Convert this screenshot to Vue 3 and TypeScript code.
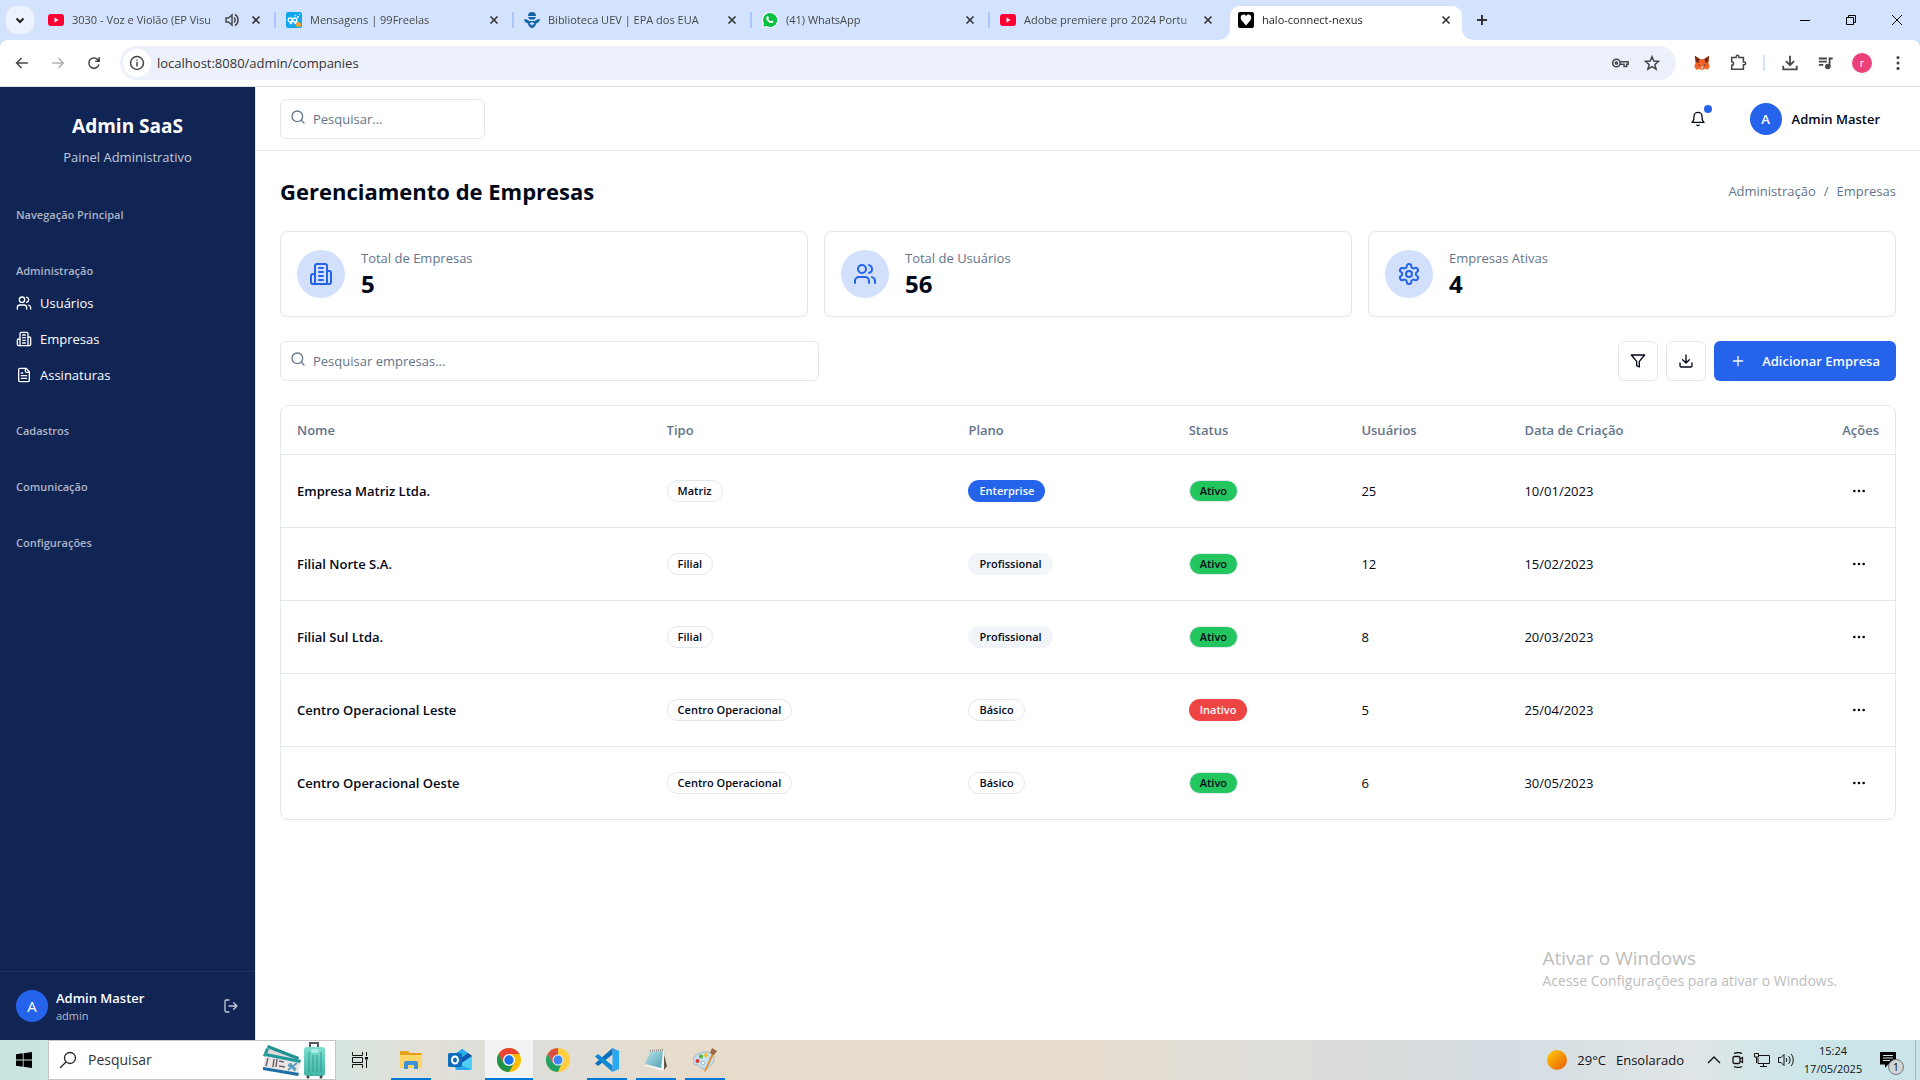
<script setup lang="ts">
interface Tab {
  title: string
  icon: string
  audio?: boolean
  active?: boolean
}

interface Company {
  name: string
  type: string
  plan: string
  planStyle: string
  active: boolean
  users: number
  created: string
}

const tabs: Tab[] = [
  { title: '3030 - Voz e Violão (EP Visu', icon: 'youtube', audio: true },
  { title: 'Mensagens | 99Freelas', icon: 'freelas' },
  { title: 'Biblioteca UEV | EPA dos EUA', icon: 'epa' },
  { title: '(41) WhatsApp', icon: 'whatsapp' },
  { title: 'Adobe premiere pro 2024 Portu', icon: 'youtube' },
  { title: 'halo-connect-nexus', icon: 'heart', active: true },
]

const groups = [
  { label: 'Navegação Principal', items: [] },
  {
    label: 'Administração',
    items: [
      { label: 'Usuários', icon: 'users' },
      { label: 'Empresas', icon: 'building' },
      { label: 'Assinaturas', icon: 'file' },
    ],
  },
  { label: 'Cadastros', items: [] },
  { label: 'Comunicação', items: [] },
  { label: 'Configurações', items: [] },
]

const stats = [
  { label: 'Total de Empresas', value: 5, icon: 'building' },
  { label: 'Total de Usuários', value: 56, icon: 'users' },
  { label: 'Empresas Ativas', value: 4, icon: 'settings' },
]

const companies: Company[] = [
  { name: 'Empresa Matriz Ltda.', type: 'Matriz', plan: 'Enterprise', planStyle: 'primary', active: true, users: 25, created: '10/01/2023' },
  { name: 'Filial Norte S.A.', type: 'Filial', plan: 'Profissional', planStyle: 'secondary', active: true, users: 12, created: '15/02/2023' },
  { name: 'Filial Sul Ltda.', type: 'Filial', plan: 'Profissional', planStyle: 'secondary', active: true, users: 8, created: '20/03/2023' },
  { name: 'Centro Operacional Leste', type: 'Centro Operacional', plan: 'Básico', planStyle: 'outline', active: false, users: 5, created: '25/04/2023' },
  { name: 'Centro Operacional Oeste', type: 'Centro Operacional', plan: 'Básico', planStyle: 'outline', active: true, users: 6, created: '30/05/2023' },
]

const pinned = [
  { name: 'Explorador de Arquivos', icon: 'explorer', running: true },
  { name: 'Outlook', icon: 'outlook', running: false },
  { name: 'Google Chrome', icon: 'chrome', running: true, focused: true },
  { name: 'Google Chrome 2', icon: 'chrome-alt', running: false },
  { name: 'Visual Studio Code', icon: 'vscode', running: true },
  { name: 'Bloco de Notas', icon: 'notepad', running: true },
  { name: 'Paint', icon: 'paint', running: true },
]
</script>

<template>
  <div class="desktop">
    <svg class="sprite" aria-hidden="true">
      <defs>
        <linearGradient id="sunFill" x1="0" y1="0" x2="1" y2="1">
          <stop offset="0" stop-color="#ffd000" />
          <stop offset="1" stop-color="#e8590c" />
        </linearGradient>
        <linearGradient id="padFill" x1="0" y1="0" x2="1" y2="1">
          <stop offset="0" stop-color="#bfe6ec" />
          <stop offset="1" stop-color="#4e9fb5" />
        </linearGradient>
        <linearGradient id="caseFill" x1="0" y1="0" x2="0" y2="1">
          <stop offset="0" stop-color="#7ddfd0" />
          <stop offset="1" stop-color="#3fb5a8" />
        </linearGradient>
      </defs>
      <symbol id="i-users" viewBox="0 0 24 24"><path d="M16 21v-2a4 4 0 0 0-4-4H6a4 4 0 0 0-4 4v2" /><circle cx="9" cy="7" r="4" /><path d="M22 21v-2a4 4 0 0 0-3-3.87M16 3.13a4 4 0 0 1 0 7.75" /></symbol>
      <symbol id="i-building" viewBox="0 0 24 24"><path d="M6 22V4a2 2 0 0 1 2-2h8a2 2 0 0 1 2 2v18Z" /><path d="M6 12H4a2 2 0 0 0-2 2v6a2 2 0 0 0 2 2h2M18 9h2a2 2 0 0 1 2 2v9a2 2 0 0 1-2 2h-2M10 6h4M10 10h4M10 14h4M10 18h4" /></symbol>
      <symbol id="i-file" viewBox="0 0 24 24"><path d="M15 2H6a2 2 0 0 0-2 2v16a2 2 0 0 0 2 2h12a2 2 0 0 0 2-2V7Z" /><path d="M14 2v4a2 2 0 0 0 2 2h4M10 9H8M16 13H8M16 17H8" /></symbol>
      <symbol id="i-settings" viewBox="0 0 24 24"><path d="M12.22 2h-.44a2 2 0 0 0-2 2v.18a2 2 0 0 1-1 1.73l-.43.25a2 2 0 0 1-2 0l-.15-.08a2 2 0 0 0-2.73.73l-.22.38a2 2 0 0 0 .73 2.73l.15.1a2 2 0 0 1 1 1.72v.51a2 2 0 0 1-1 1.74l-.15.09a2 2 0 0 0-.73 2.73l.22.38a2 2 0 0 0 2.73.73l.15-.08a2 2 0 0 1 2 0l.43.25a2 2 0 0 1 1 1.73V20a2 2 0 0 0 2 2h.44a2 2 0 0 0 2-2v-.18a2 2 0 0 1 1-1.73l.43-.25a2 2 0 0 1 2 0l.15.08a2 2 0 0 0 2.73-.73l.22-.39a2 2 0 0 0-.73-2.73l-.15-.08a2 2 0 0 1-1-1.74v-.5a2 2 0 0 1 1-1.74l.15-.09a2 2 0 0 0 .73-2.73l-.22-.38a2 2 0 0 0-2.73-.73l-.15.08a2 2 0 0 1-2 0l-.43-.25a2 2 0 0 1-1-1.73V4a2 2 0 0 0-2-2z" /><circle cx="12" cy="12" r="3" /></symbol>
      <symbol id="i-search" viewBox="0 0 24 24"><circle cx="11" cy="11" r="8" /><path d="m21 21-4.3-4.3" /></symbol>
      <symbol id="i-bell" viewBox="0 0 24 24"><path d="M6 8a6 6 0 0 1 12 0c0 7 3 9 3 9H3s3-2 3-9M10.3 21a1.94 1.94 0 0 0 3.4 0" /></symbol>
      <symbol id="i-filter" viewBox="0 0 24 24"><path d="M22 3H2l8 9.46V19l4 2v-8.54L22 3z" /></symbol>
      <symbol id="i-download" viewBox="0 0 24 24"><path d="M21 15v4a2 2 0 0 1-2 2H5a2 2 0 0 1-2-2v-4M7 10l5 5 5-5M12 15V3" /></symbol>
      <symbol id="i-plus" viewBox="0 0 24 24"><path d="M5 12h14M12 5v14" /></symbol>
      <symbol id="i-dots" viewBox="0 0 24 24"><circle cx="12" cy="12" r="1" /><circle cx="19" cy="12" r="1" /><circle cx="5" cy="12" r="1" /></symbol>
      <symbol id="i-logout" viewBox="0 0 24 24"><path d="M9 21H5a2 2 0 0 1-2-2V5a2 2 0 0 1 2-2h4M16 17l5-5-5-5M21 12H9" /></symbol>
      <symbol id="i-close" viewBox="0 0 16 16"><path d="M4.500 4.500l7 7M11.500 4.500l-7 7" /></symbol>

      <symbol id="f-youtube" viewBox="0 0 16 16"><rect y="2" width="16" height="12" rx="3" fill="#ff0033" /><path d="M6.500 5.500v5L10.500 8z" fill="#fff" /></symbol>
      <symbol id="f-freelas" viewBox="0 0 16 16"><rect width="16" height="16" rx="2" fill="#0fa8ee" /><circle cx="4.200" cy="8" r="2" fill="none" stroke="#fff" stroke-width="1.300" /><circle cx="8.800" cy="8" r="2" fill="none" stroke="#fff" stroke-width="1.300" /><path d="M6.200 8.500c0 2-1 3-2.500 3.500M10.800 8.500c0 2-1 3-2.500 3.500" fill="none" stroke="#fff" stroke-width="1.300" /><circle cx="12.500" cy="12.500" r="2.500" fill="#fba524" /><circle cx="12" cy="5" r="1" fill="#fff" /><circle cx="9.500" cy="3.500" r=".8" fill="#fff" /><circle cx="13.500" cy="2.500" r=".7" fill="#fff" /></symbol>
      <symbol id="f-epa" viewBox="0 0 16 16"><path d="M4 4a4 4 0 0 1 8 0c0 2-1 3-2 3.500H6C5 7 4 6 4 4z" fill="#1465a8" /><path d="M4 4.500h8" stroke="#d3e3fd" /><path d="M0 7c3 0 4 1 5 2h6c1-1 2-2 5-2-.5 3-2 4-4 4.500 0 2-2 4.500-4 4.500s-4-2.500-4-4.500C2 11 .5 10 0 7z" fill="#1465a8" /><path d="M5.500 11.500 8 10l2.500 1.500L8 13.500z" fill="#d3e3fd" /></symbol>
      <symbol id="f-whatsapp" viewBox="0 0 16 16"><path d="M8 0a8 8 0 0 0-7 11.800L0 16l4.300-1A8 8 0 1 0 8 0z" fill="#fff" /><path d="M8 1a7 7 0 0 0-6 10.500L1.300 14.700l3.200-.8A7 7 0 1 0 8 1z" fill="#08c143" /><path d="M5.600 4.200c.4 0 .6 0 .8.5l.5 1.200c0 .4-.6.900-.6 1.100.5 1 1.300 1.800 2.500 2.300.3 0 .7-.9 1-.9l1.700.9c0 1.100-.9 1.800-1.900 1.800C7 10.800 4.200 8 4.200 5.900c0-.8.700-1.700 1.400-1.700z" fill="#fff" /></symbol>
      <symbol id="f-heart" viewBox="0 0 16 16"><rect width="16" height="16" rx="2" fill="#000" /><path d="M8 13.500 3.800 8.500C1.500 5.500 3.200 2.500 5.500 2.500 6.800 2.500 7.600 3.200 8 4c.4-.8 1.200-1.500 2.500-1.500 2.300 0 4 3 1.700 6z" fill="#fff" /></symbol>

      <symbol id="t-explorer" viewBox="0 0 24 24"><path d="M1 4a1 1 0 0 1 1-1h7l2 2h10a2 2 0 0 1 2 2v13H1z" fill="#e6a117" /><path d="M1 7h22v12a1 1 0 0 1-1 1H2a1 1 0 0 1-1-1z" fill="#ffd667" /><path d="M5 21v-6a2 2 0 0 1 2-2h10a2 2 0 0 1 2 2v6h-4v-4H9v4z" fill="#3d8fd6" /></symbol>
      <symbol id="t-outlook" viewBox="0 0 24 24"><path d="M4 8 14 1l10 7v11a3 3 0 0 1-3 3H8z" fill="#1b86d8" /><path d="m14 1 6 4-10 8-5-5z" fill="#29b3ee" /><path d="m10 14 14-7v12a3 3 0 0 1-3 3H8z" fill="#4fd0fb" /><path d="m20 5 4 3-12 8-3-3z" fill="#0f57ae" /><path d="m10 16 13 5-2 1H8z" fill="#2aa8ee" /><rect y="5" width="14" height="14" rx="1.500" fill="#0f6cbd" /><ellipse cx="7" cy="12" rx="3" ry="3.500" fill="none" stroke="#fff" stroke-width="2" /></symbol>
      <symbol id="t-chrome" viewBox="0 0 24 24"><circle cx="12" cy="12" r="12" fill="#fbbc04" /><path d="M1.600 6A12 12 0 0 1 22.400 6H12L6.800 15z" fill="#ea4335" /><path d="M1.600 6A12 12 0 0 0 12 24l5.200-9H6.800z" fill="#1e9448" /><circle cx="12" cy="12" r="6" fill="#fff" /><circle cx="12" cy="12" r="4.700" fill="#1a73e8" /></symbol>
      <symbol id="t-chrome-alt" viewBox="0 0 24 24"><circle cx="12" cy="12" r="12" fill="#ffcf3f" /><path d="M12 0A12 12 0 0 0 1.600 6l5.200 9L12 6z" fill="#d94f43" /><path d="M1.600 6A12 12 0 0 0 12 24l3-7-8.200-2z" fill="#23a065" /><circle cx="12" cy="12" r="5.500" fill="#e8f0fe" /><circle cx="12" cy="12" r="4.500" fill="#4286f5" /></symbol>
      <symbol id="t-vscode" viewBox="0 0 24 24"><path d="M17.500 0 24 3v18l-6.500 3z" fill="#29a9f2" /><path d="M17.500 0v6.500L3 18l-3-2.500z" fill="#0a6fb8" /><path d="M0 8.500 3 6l14.500 11.500V24z" fill="#1088d6" /></symbol>
      <symbol id="t-notepad" viewBox="0 0 24 24"><path d="m19 3 4 15-3 4z" fill="#5d5546" /><path d="m6 3 14-1v20l-1 1L1 18z" fill="#f4f4ee" /><path d="m6 4 13-1-2 17-16-4z" fill="url(#padFill)" /><path d="m6 3 13-1" stroke="#8a8a80" stroke-width="2" stroke-dasharray="1 1" /></symbol>
      <symbol id="t-paint" viewBox="0 0 24 24"><path d="M11 4c7-1 11 3 10 8s-6 9-11 9c-3 0-3-3-5-4-3 0-5-1-5-4 0-5 5-8 11-9z" fill="#c5dfee" stroke="#7f9dad" stroke-width=".6" /><circle cx="4.500" cy="13" r="2" fill="#df3b2e" /><circle cx="8" cy="8.500" r="2" fill="#55ae35" /><circle cx="13" cy="7" r="2" fill="#f0bd27" /><circle cx="10" cy="15" r="1.700" fill="#f5fafc" stroke="#7f9dad" stroke-width=".6" /><path d="m19 5 2 1-8 17-2 1z" fill="#e58a2b" /><path d="m19 0 5 3-3 4-4-2z" fill="#9c6a43" /></symbol>
    </svg>

    <header class="browser">
      <div class="tabstrip">
        <button class="tab-search" aria-label="Pesquisar guias">
          <svg width="16" height="16" viewBox="0 0 16 16"><path d="m4.500 6.500 3.500 3.500 3.500-3.500" fill="none" stroke="#1f1f1f" stroke-width="2" /></svg>
        </button>
        <div v-for="tab in tabs" :key="tab.title" class="tab" :class="{ active: tab.active }">
          <svg class="favicon"><use :href="'#f-' + tab.icon" /></svg>
          <span class="tab-title">{{ tab.title }}</span>
          <svg v-if="tab.audio" class="audio" viewBox="0 0 16 16"><path d="M2 6h2.500L8 3v10L4.500 10H2z" fill="none" stroke="#474747" stroke-width="1.500" /><path d="M10 5.500c1.500 1.300 1.500 3.700 0 5M11 2.500c4 2 4 9 0 11" fill="none" stroke="#474747" stroke-width="1.500" /></svg>
          <button class="tab-close" aria-label="Fechar guia"><svg class="close-icon"><use href="#i-close" /></svg></button>
        </div>
        <button class="new-tab" aria-label="Nova guia">
          <svg width="16" height="16" viewBox="0 0 16 16"><path d="M8 3v10M3 8h10" stroke="#333" stroke-width="2" /></svg>
        </button>
        <div class="window-controls">
          <button aria-label="Minimizar"><svg width="10" height="10" viewBox="0 0 10 10"><path d="M0 5.500h10" /></svg></button>
          <button aria-label="Restaurar"><svg width="10" height="10" viewBox="0 0 10 10"><path d="M.5 2.500h7v7h-7zM2.500 2.500v-2h7v7h-2" /></svg></button>
          <button aria-label="Fechar"><svg width="10" height="10" viewBox="0 0 10 10"><path d="m0 0 10 10M10 0 0 10" /></svg></button>
        </div>
      </div>

      <div class="toolbar">
        <button class="tool" aria-label="Voltar"><svg viewBox="0 0 20 20"><path d="M16.500 10H4.500M9.500 4.500 4 10l5.500 5.500" /></svg></button>
        <button class="tool disabled" aria-label="Avançar"><svg viewBox="0 0 20 20"><path d="M3.500 10h12M10.500 4.500 16 10l-5.500 5.500" /></svg></button>
        <button class="tool" aria-label="Recarregar"><svg viewBox="0 0 20 20"><path d="M15.500 11.500A5.700 5.700 0 1 1 14 6l1.500 1.500M15.800 3.500V8h-4.500" /></svg></button>
        <div class="omnibox">
          <span class="site-info"><svg viewBox="0 0 20 20"><circle cx="10" cy="10" r="7.200" /><path d="M10 9v5M10 6v1.600" /></svg></span>
          <input class="url" type="text" value="localhost:8080/admin/companies" aria-label="Barra de endereço" />
          <button class="omni-btn" aria-label="Senhas"><svg viewBox="0 0 20 20"><circle cx="6" cy="10" r="4.200" /><circle cx="6" cy="10" r="1.200" /><path d="M10 8.500h9v3h-1.500V14h-3v-2.500H10" /></svg></button>
          <button class="omni-btn" aria-label="Favoritar"><svg viewBox="0 0 20 20"><path d="m10 3 2 4.800 5.200.4-4 3.400 1.300 5.100L10 14l-4.500 2.700 1.300-5.100-4-3.400L8 7.800z" /></svg></button>
        </div>
        <button class="tool" aria-label="MetaMask">
          <svg viewBox="0 0 20 20"><path d="m2 2 5.500 3.500h5L18 2l-1 7 1.500 5-2 3.500-3.500-1-1.500 1h-3l-1.500-1-3.500 1-2-3.500L3 9z" fill="#f2652a" stroke="none" /><path d="m2 2 5.500 3.500L6 10 3 9zM18 2l-5.500 3.500L14 10l3-1z" fill="#7a2a14" stroke="none" /><path d="m7 11 1 2-2-.5zM13 11l-1 2 2-.5z" fill="#2b2b3a" stroke="none" /><path d="m8.500 16 .5-2h2l.5 2z" fill="#c7cbd8" stroke="none" /></svg>
        </button>
        <button class="tool" aria-label="Extensões"><svg viewBox="0 0 20 20"><path d="M3 4h5V3a1.500 1.500 0 0 1 3 0v1h5v5h1a1.500 1.500 0 0 1 0 3h-1v5H3v-4.500a2 2 0 0 0 0-4z" /></svg></button>
        <span class="tool-divider"></span>
        <button class="tool" aria-label="Downloads"><svg viewBox="0 0 20 20"><path d="M10 2v10M5.500 8l4.500 4.500L14.500 8M2.500 13v4h15v-4" stroke-width="2" /></svg></button>
        <button class="tool" aria-label="Mídia"><svg viewBox="0 0 20 20"><path d="M2 5h9M2 8.500h9M2 12h5M14 14V5h3.500" stroke-width="2" /><circle cx="12" cy="14" r="2.200" fill="#474747" /></svg></button>
        <button class="tool" aria-label="Perfil"><span class="profile">r</span></button>
        <button class="tool" aria-label="Menu"><svg viewBox="0 0 20 20"><g fill="#474747" stroke="none"><circle cx="10" cy="4" r="1.700" /><circle cx="10" cy="10" r="1.700" /><circle cx="10" cy="16" r="1.700" /></g></svg></button>
      </div>
    </header>

    <div class="app">
      <aside class="sidebar">
        <div class="brand">
          <h1>Admin SaaS</h1>
          <p>Painel Administrativo</p>
        </div>
        <nav class="nav">
          <section v-for="group in groups" :key="group.label" class="nav-group">
            <h2>{{ group.label }}</h2>
            <ul v-if="group.items.length">
              <li v-for="item in group.items" :key="item.label">
                <a href="#"><svg class="icon16"><use :href="'#i-' + item.icon" /></svg>{{ item.label }}</a>
              </li>
            </ul>
          </section>
        </nav>
        <div class="account">
          <span class="avatar light">A</span>
          <div class="account-text">
            <strong>Admin Master</strong>
            <span>admin</span>
          </div>
          <button class="logout" aria-label="Sair"><svg class="icon16"><use href="#i-logout" /></svg></button>
        </div>
      </aside>

      <div class="content">
        <div class="topbar">
          <label class="search global">
            <svg class="icon16"><use href="#i-search" /></svg>
            <input type="text" placeholder="Pesquisar..." aria-label="Pesquisar" />
          </label>
          <div class="topbar-right">
            <button class="bell" aria-label="Notificações">
              <svg class="icon16"><use href="#i-bell" /></svg>
              <span class="bell-dot"></span>
            </button>
            <button class="user"><span class="avatar">A</span>Admin Master</button>
          </div>
        </div>

        <main class="page">
          <div class="page-head">
            <h2>Gerenciamento de Empresas</h2>
            <nav class="crumbs"><a href="#">Administração</a><span>/</span><span>Empresas</span></nav>
          </div>

          <div class="stats">
            <div v-for="stat in stats" :key="stat.label" class="card">
              <span class="card-icon"><svg class="icon24"><use :href="'#i-' + stat.icon" /></svg></span>
              <div>
                <p class="card-label">{{ stat.label }}</p>
                <p class="card-value">{{ stat.value }}</p>
              </div>
            </div>
          </div>

          <div class="actions">
            <label class="search companies">
              <svg class="icon16"><use href="#i-search" /></svg>
              <input type="text" placeholder="Pesquisar empresas..." aria-label="Pesquisar empresas" />
            </label>
            <div class="action-buttons">
              <button class="square" aria-label="Filtrar"><svg class="icon16"><use href="#i-filter" /></svg></button>
              <button class="square" aria-label="Exportar"><svg class="icon16"><use href="#i-download" /></svg></button>
              <button class="add"><svg class="icon16"><use href="#i-plus" /></svg>Adicionar Empresa</button>
            </div>
          </div>

          <div class="table-wrap">
            <table>
              <colgroup>
                <col class="c-name" /><col class="c-type" /><col class="c-plan" /><col class="c-status" /><col class="c-users" /><col class="c-date" /><col />
              </colgroup>
              <thead>
                <tr>
                  <th>Nome</th>
                  <th>Tipo</th>
                  <th>Plano</th>
                  <th>Status</th>
                  <th>Usuários</th>
                  <th>Data de Criação</th>
                  <th class="right">Ações</th>
                </tr>
              </thead>
              <tbody>
                <tr v-for="company in companies" :key="company.name">
                  <td class="name">{{ company.name }}</td>
                  <td><span class="badge outline">{{ company.type }}</span></td>
                  <td><span class="badge" :class="company.planStyle">{{ company.plan }}</span></td>
                  <td><span class="badge" :class="company.active ? 'success' : 'danger'">{{ company.active ? 'Ativo' : 'Inativo' }}</span></td>
                  <td>{{ company.users }}</td>
                  <td>{{ company.created }}</td>
                  <td class="right"><button class="more" aria-label="Ações"><svg class="icon16"><use href="#i-dots" /></svg></button></td>
                </tr>
              </tbody>
            </table>
          </div>
        </main>

        <div class="watermark">
          <p class="wm-title">Ativar o Windows</p>
          <p class="wm-text">Acesse Configurações para ativar o Windows.</p>
        </div>
      </div>
    </div>

    <footer class="taskbar">
      <button class="start" aria-label="Iniciar"><svg width="16" height="16" viewBox="0 0 16 16"><path d="M0 2.300 6.800 1.300V7.600H0zM7.600 1.200 16 0v7.600H7.600zM0 8.400h6.800v6.300L0 13.700zM7.600 8.400H16V16l-8.400-1.200z" /></svg></button>
      <label class="task-search">
        <svg width="18" height="18" viewBox="0 0 18 18"><circle cx="11" cy="7" r="5.500" fill="none" stroke="#222" stroke-width="1.300" /><path d="m7 11-6 6" stroke="#222" stroke-width="1.300" /></svg>
        <input type="text" placeholder="Pesquisar" aria-label="Pesquisar no Windows" />
        <svg class="travel" width="66" height="38" viewBox="0 0 66 38">
          <path d="m7 4 31 12-3 9L2 15z" fill="#e2dadd" /><path d="m7 4 31 12-1 3L6 7z" fill="#1d9291" /><path d="m2 15 3-8 3 1-3 8z" fill="#2b9aa0" />
          <path d="m5 12 35 7-3 15-35-6z" fill="#ece5e2" /><path d="m5 12 35 7-1 3-35-7z" fill="#1d9a99" /><path d="m2 26 36 6-1 3-35-6z" fill="#1c6fa5" />
          <path d="m7 17-2 8M13 18l-1 8M16 18l-1 8" stroke="#6a6374" stroke-width="1.500" /><path d="m18 20 5 1M18 25l6 1" stroke="#6a6374" stroke-width="1.500" />
          <path d="m27 29 9-7M29 22l5 8M27 24l8 4" stroke="#5a9fc0" stroke-width="2" />
          <path d="M49 6V2h8v4" fill="none" stroke="#59595f" stroke-width="2" /><rect x="43" y="6" width="21" height="29" rx="3" fill="url(#caseFill)" /><path d="M48 11v20M52 14v17M56 14v17M60 11v20" stroke="#34998f" /><rect x="50" y="8" width="8" height="4" rx="2" fill="#a8ece2" /><circle cx="47" cy="36" r="1.500" fill="#444" /><circle cx="60" cy="36" r="1.500" fill="#444" />
        </svg>
      </label>
      <button class="task-view" aria-label="Visão de tarefas"><svg width="16" height="16" viewBox="0 0 16 16" fill="none" stroke="#111"><path d="M.5 0v3.500h10V0M.5 16v-3.500h10V16M.5 5.500h10v5H.5zM14.500 0v4M14.500 8v8" /><path d="M13 5h3v2.500h-3z" fill="#111" stroke="none" /></svg></button>
      <div class="pinned">
        <button v-for="item in pinned" :key="item.name" class="pin" :class="{ running: item.running, focused: item.focused }" :aria-label="item.name">
          <svg class="icon-app"><use :href="'#t-' + item.icon" /></svg>
        </button>
      </div>
      <div class="tray">
        <button class="weather"><svg width="20" height="20" viewBox="0 0 20 20"><circle cx="10" cy="10" r="10" fill="url(#sunFill)" /></svg><span>29°C</span><span>Ensolarado</span></button>
        <div class="tray-icons">
          <button aria-label="Mostrar ícones ocultos"><svg width="16" height="16" viewBox="0 0 16 16"><path d="m2 11 6-6 6 6" stroke-width="1.400" /></svg></button>
          <button aria-label="Câmera"><svg width="16" height="16" viewBox="0 0 16 16"><rect x="3" y="4.500" width="7" height="7" rx="1.500" stroke-width="1.300" /><path d="m10 7 2.500-1.500v5L10 9M4 1.500c2.500-1.200 5.500-1.200 8 0M4 14.500c2.500 1.200 5.500 1.200 8 0" stroke-width="1.200" /></svg></button>
          <button aria-label="Rede"><svg width="16" height="16" viewBox="0 0 16 16"><path d="M5 3.500h10.500v8H4V6M9.500 11.500v3M6 14.500h7M.5 1.500h4V5h-4zM2.500 5v6" /></svg></button>
          <button aria-label="Volume"><svg width="16" height="16" viewBox="0 0 16 16"><path d="M.5 5.500h2.500l3-3v11l-3-3H.5zM8 6c1 1 1 3 0 4M10.500 4c2 2 2 6 0 8M13 2c3 3 3 9 0 12" /></svg></button>
        </div>
        <button class="clock"><span>15:24</span><span>17/05/2025</span></button>
        <button class="notify" aria-label="1 nova notificação">
          <svg width="16" height="16" viewBox="0 0 16 16"><path d="M0 0h16v12.500H8L5 16v-3.500H0z" fill="#000" /><path d="M3 3.500h10M3 6h10M3 8.500h7" stroke="#cfe6ea" /></svg>
          <span class="notify-count">1</span>
        </button>
      </div>
    </footer>
  </div>
</template>

<style>
body {
  margin: 0;
  background: #fff;
}
</style>

<style scoped>
* {
  box-sizing: border-box;
}

.desktop {
  display: flex;
  flex-direction: column;
  min-height: 100vh;
  font-family: "Open Sans", "Noto Sans", sans-serif;
  font-size: 13px;
  line-height: 20px;
  color: #020817;
}

h1,
h2,
p,
ul {
  margin: 0;
  padding: 0;
  list-style: none;
}

button,
input {
  font: inherit;
  color: inherit;
  border: 0;
  padding: 0;
  margin: 0;
  background: none;
}

button {
  display: flex;
  align-items: center;
  justify-content: center;
}

a {
  color: inherit;
  text-decoration: none;
}

svg {
  flex: none;
}

.sprite {
  position: absolute;
  width: 0;
  height: 0;
}

.icon16,
.icon24 {
  width: 16px;
  height: 16px;
  fill: none;
  stroke: currentColor;
  stroke-width: 2;
  stroke-linecap: round;
  stroke-linejoin: round;
}

.icon24 {
  width: 24px;
  height: 24px;
}

/* Browser window */
.browser {
  background: #d3e3fd;
  border-bottom: 1px solid #dfe1e5;
}

.tabstrip {
  display: flex;
  align-items: flex-end;
  height: 40px;
  padding-left: 6px;
  font-size: 11px;
}

.tab-search {
  width: 28px;
  height: 28px;
  margin: 0 4px 6px 0;
  border-radius: 10px;
  background: #ecf3fe;
}

.tab {
  position: relative;
  display: flex;
  align-items: center;
  flex: 0 1 238px;
  min-width: 0;
  height: 34px;
  padding: 0 12px 6px 10px;
  color: #474747;
}

.tab::after {
  content: "";
  position: absolute;
  right: 0;
  top: 6px;
  width: 2px;
  height: 16px;
  background: #a8c7fa;
}

.tab.active::after,
.tab:has(+ .active)::after {
  display: none;
}

.tab.active {
  flex-basis: 232px;
  margin-left: 2px;
  padding: 0 8px 6px;
  background: #fff;
  border-radius: 10px 10px 0 0;
  color: #1f1f1f;
}

/* Flared feet that join the active tab to the toolbar */
.tab.active::before {
  content: "";
  position: absolute;
  left: -10px;
  right: -10px;
  bottom: 0;
  height: 10px;
  background:
    radial-gradient(circle at 0 0, transparent 9px, #fff 10px) left / 10px 10px no-repeat,
    radial-gradient(circle at 100% 0, transparent 9px, #fff 10px) right / 10px 10px no-repeat;
}

.favicon {
  width: 16px;
  height: 16px;
  margin-right: 8px;
}

.tab-title {
  flex: 1;
  min-width: 0;
  overflow: hidden;
  white-space: nowrap;
  line-height: 16px;
  mask-image: linear-gradient(to left, transparent, #000 16px);
}

.audio {
  width: 16px;
  height: 16px;
  margin-right: 4px;
}

.tab-close {
  width: 16px;
  height: 16px;
  margin-left: 4px;
}

.close-icon {
  width: 16px;
  height: 16px;
  fill: none;
  stroke: #333;
  stroke-width: 1.6;
}

.new-tab {
  width: 28px;
  height: 28px;
  margin: 0 0 6px 6px;
}

.window-controls {
  display: flex;
  align-self: stretch;
  margin-left: auto;
}

.window-controls button {
  width: 46px;
}

.window-controls svg {
  fill: none;
  stroke: #000;
}

.toolbar {
  display: flex;
  align-items: center;
  height: 46px;
  padding: 0 4px;
  background: #fff;
  border-radius: 8px 8px 0 0;
}

.tool {
  width: 36px;
  height: 34px;
}

.tool svg,
.omnibox svg {
  width: 18px;
  height: 18px;
  fill: none;
  stroke: #474747;
  stroke-width: 1.7;
}

.tool.disabled svg {
  stroke: #b0b0b0;
}

.omnibox {
  display: flex;
  align-items: center;
  flex: 1;
  height: 34px;
  margin: 0 8px;
  padding: 0 8px 0 3px;
  border-radius: 17px;
  background: #ecf0fa;
}

.site-info {
  display: flex;
  align-items: center;
  justify-content: center;
  width: 28px;
  height: 28px;
  border-radius: 50%;
  background: #fff;
}

.url {
  flex: 1;
  margin-left: 6px;
  color: #333;
  outline: 0;
}

.omni-btn {
  width: 32px;
  height: 28px;
}

.tool-divider {
  width: 2px;
  height: 16px;
  margin: 0 7px;
  background: #d3e3fd;
}

.profile {
  width: 20px;
  height: 20px;
  border-radius: 50%;
  background: #ec407a;
  color: #fff;
  font-size: 11px;
  line-height: 19px;
}

/* Application */
.app {
  display: flex;
  flex: 1;
}

.sidebar {
  display: flex;
  flex-direction: column;
  flex: none;
  width: 256px;
  border-right: 1px solid #e2e8f0;
  background: #112555;
  color: #fff;
}

.brand {
  padding: 24px 24px 32px;
  text-align: center;
}

.brand h1 {
  font-size: 19px;
  font-weight: 700;
  line-height: 30px;
}

.brand p {
  margin-top: 6px;
  color: #c4c9d5;
}

.nav {
  display: flex;
  flex-direction: column;
  gap: 24px;
  flex: 1;
}

.nav-group h2 {
  padding: 0 16px;
  font-size: 11px;
  font-weight: 600;
  line-height: 32px;
  color: #adb4c4;
}

.nav-group ul {
  display: flex;
  flex-direction: column;
  gap: 4px;
}

.nav-group a {
  display: flex;
  align-items: center;
  gap: 8px;
  height: 32px;
  padding: 0 16px;
}

.account {
  display: flex;
  align-items: center;
  gap: 8px;
  height: 69px;
  padding: 0 16px;
  border-top: 1px solid #182f68;
}

.avatar {
  width: 32px;
  height: 32px;
  border-radius: 50%;
  background: #2563eb;
  color: #fff;
  font-weight: 600;
  line-height: 32px;
  text-align: center;
}

.avatar.light {
  font-size: 15px;
  font-weight: 400;
}

.account-text {
  display: flex;
  flex-direction: column;
  flex: 1;
}

.account-text strong {
  font-weight: 600;
  line-height: 20px;
}

.account-text span {
  font-size: 11px;
  line-height: 16px;
  color: #b7bdcb;
}

.logout {
  width: 16px;
  height: 16px;
  color: #c4c9d5;
}

.content {
  position: relative;
  flex: 1;
  min-width: 0;
}

.topbar {
  display: flex;
  align-items: center;
  justify-content: space-between;
  height: 64px;
  padding: 0 24px;
  border-bottom: 1px solid #e2e8f0;
}

.search {
  position: relative;
  display: block;
}

.search svg {
  position: absolute;
  left: 10px;
  top: 10px;
  color: #64748b;
}

.search input {
  width: 100%;
  height: 40px;
  padding: 0 12px 0 32px;
  border: 1px solid #e2e8f0;
  border-radius: 6px;
}

.search input::placeholder {
  color: #64748b;
  opacity: 1;
}

.search.global {
  width: 205px;
}

.topbar-right {
  display: flex;
  align-items: center;
  gap: 16px;
}

.bell {
  position: relative;
  width: 40px;
  height: 40px;
}

.bell-dot {
  position: absolute;
  top: 6px;
  right: 6px;
  width: 8px;
  height: 8px;
  border-radius: 50%;
  background: #2563eb;
}

.user {
  gap: 10px;
  padding: 0 16px;
  font-weight: 600;
}

.page {
  display: flex;
  flex-direction: column;
  gap: 24px;
  padding: 24px;
}

.page-head {
  display: flex;
  align-items: center;
  justify-content: space-between;
  height: 32px;
}

.page-head h2 {
  font-size: 22px;
  font-weight: 700;
  line-height: 32px;
}

.crumbs {
  display: flex;
  gap: 8px;
  color: #64748b;
}

.stats {
  display: grid;
  grid-template-columns: repeat(3, 1fr);
  gap: 16px;
}

.card {
  display: flex;
  align-items: center;
  gap: 16px;
  height: 86px;
  padding: 0 16px;
  border: 1px solid #e2e8f0;
  border-radius: 8px;
  box-shadow: 0 1px 2px rgba(0, 0, 0, 0.05);
}

.card-icon {
  display: flex;
  align-items: center;
  justify-content: center;
  width: 48px;
  height: 48px;
  border-radius: 50%;
  background: #d3e0fb;
  color: #2563eb;
}

.card-label {
  color: #64748b;
}

.card-value {
  font-size: 24px;
  font-weight: 700;
  line-height: 32px;
}

.actions {
  display: flex;
  justify-content: space-between;
}

.search.companies {
  width: 33.33%;
}

.action-buttons {
  display: flex;
  gap: 8px;
}

.square {
  width: 40px;
  height: 40px;
  border: 1px solid #e2e8f0;
  border-radius: 6px;
}

.add {
  gap: 16px;
  height: 40px;
  padding: 0 16px;
  border-radius: 6px;
  background: #2563eb;
  color: #f8fafc;
  font-weight: 600;
}

.table-wrap {
  border: 1px solid #e2e8f0;
  border-radius: 8px;
}

table {
  width: 100%;
  table-layout: fixed;
  border-collapse: separate;
  border-spacing: 0;
}

.c-name {
  width: 22.9%;
}

.c-type {
  width: 18.7%;
}

.c-plan {
  width: 13.65%;
}

.c-status {
  width: 10.7%;
}

.c-users {
  width: 10.1%;
}

.c-date {
  width: 12%;
}

th,
td {
  padding: 0 16px;
  border-bottom: 1px solid #e2e8f0;
  text-align: left;
}

th {
  height: 49px;
  font-weight: 600;
  color: #64748b;
}

td {
  height: 73px;
}

tbody tr:last-child td {
  height: 72px;
  border-bottom: 0;
}

.right {
  text-align: right;
}

.name {
  font-weight: 600;
}

.badge {
  display: inline-block;
  padding: 2px 10px;
  border: 1px solid transparent;
  border-radius: 11px;
  font-size: 11px;
  font-weight: 600;
  line-height: 16px;
}

.outline {
  border-color: #e2e8f0;
}

.primary {
  background: #2563eb;
  color: #f8fafc;
}

.secondary {
  background: #f1f5f9;
}

.success {
  border-color: #e2e8f0;
  background: #22c55e;
}

.danger {
  background: #ef4444;
  color: #f8fafc;
}

.more {
  width: 40px;
  height: 40px;
  margin-left: auto;
}

.watermark {
  position: absolute;
  right: 83px;
  bottom: 49px;
  color: #bdbdbd;
}

.wm-title {
  font-size: 19px;
  line-height: 26px;
}

.wm-text {
  font-size: 14px;
  line-height: 20px;
}

/* Windows taskbar */
.taskbar {
  display: flex;
  height: 40px;
  background: linear-gradient(90deg, #c9e5e0 0%, #d2e6e0 17%, #e2dfd6 22%, #dcdedc 27%, #e7dccb 36%, #e6dccd 55%, #d5dde3 78%, #dfe5e6 88%, #cce6e9 94%, #c9e4e9 100%);
  color: #111;
}

.start {
  width: 48px;
}

.task-search {
  display: flex;
  align-items: center;
  width: 288px;
  padding-left: 10px;
  border: 1px solid #c6c6c6;
  background: #fff;
}

.task-search input {
  flex: 1;
  min-width: 0;
  margin-left: 11px;
  font-size: 14px;
}

.task-search input::placeholder {
  color: #333;
  opacity: 1;
}

.travel {
  margin-right: 8px;
}

.task-view {
  width: 48px;
  margin-right: 3px;
}

.pinned {
  display: flex;
  gap: 1px;
}

.pin {
  position: relative;
  width: 48px;
}

.pin.running::after {
  content: "";
  position: absolute;
  left: 4px;
  right: 4px;
  bottom: 0;
  height: 2px;
  background: #0078d7;
}

.pin.focused {
  background: #f0f3f2;
}

.pin.focused::after {
  left: 0;
  right: 0;
}

.icon-app {
  width: 24px;
  height: 24px;
}

.tray {
  display: flex;
  align-items: stretch;
  margin-left: auto;
  padding-right: 4px;
}

.weather {
  gap: 10px;
  margin-right: 18px;
}

.tray-icons {
  display: flex;
  margin-right: 4px;
}

.tray-icons button {
  width: 24px;
}

.tray-icons svg {
  fill: none;
  stroke: #111;
}

.clock {
  flex-direction: column;
  width: 62px;
  font-size: 11px;
  line-height: 18px;
}

.notify {
  position: relative;
  width: 52px;
  padding-right: 4px;
  border-right: 1px solid #9fb6bb;
}

.notify-count {
  position: absolute;
  left: 24px;
  top: 19px;
  width: 16px;
  height: 16px;
  border: 1px solid #777;
  border-radius: 50%;
  background: #d0d5d6;
  font-size: 11px;
  line-height: 14px;
  text-align: center;
}
</style>
